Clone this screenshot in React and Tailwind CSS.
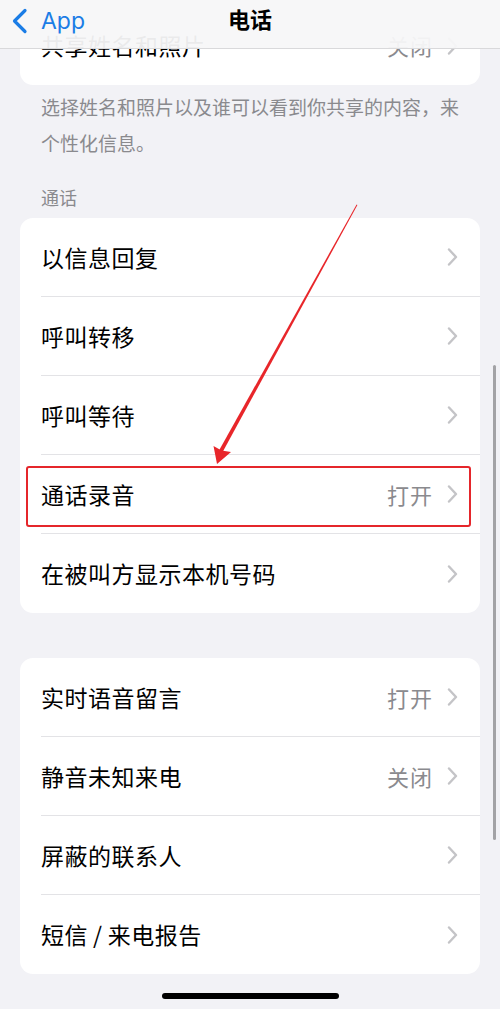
import React from "react";

const font = { fontFamily: '"Noto Sans CJK SC", "Noto Sans", sans-serif' };

function Chevron() {
  return (
    <svg width="11" height="18" viewBox="0 0 11 18" className="shrink-0">
      <path d="M2 1.5 L9 9 L2 16.5" fill="none" stroke="#c4c4c7" strokeWidth="2.4" strokeLinecap="round" strokeLinejoin="round" />
    </svg>
  );
}

function Row({ label, value, last }) {
  return (
    <div className="h-[79px] pl-[21px] flex">
      <div className={`flex-1 flex items-center pr-[22px] ${last ? "" : "border-b border-[#e3e3e6]"}`}>
        <span className="flex-1 text-[23px] text-black tracking-[0.5px]">{label}</span>
        {value && <span className="text-[22px] text-[#8a8a8e] mr-[14px] tracking-[1px]">{value}</span>}
        <Chevron />
      </div>
    </div>
  );
}

export default function App() {
  const group2 = [
    { label: "以信息回复" },
    { label: "呼叫转移" },
    { label: "呼叫等待" },
    { label: "通话录音", value: "打开" },
    { label: "在被叫方显示本机号码" },
  ];
  const group3 = [
    { label: "实时语音留言", value: "打开" },
    { label: "静音未知来电", value: "关闭" },
    { label: "屏蔽的联系人" },
    { label: "短信\u2009/\u2009来电报告" },
  ];
  return (
    <div className="relative w-[500px] h-[1009px] overflow-hidden bg-[#f2f2f6]" style={font}>
      {/* nav bar */}
      <div className="relative z-10 h-[49px] bg-[#f7f7f8]/95 border-b border-[#d9d9db] flex items-center pb-[6px]">
        <div className="flex items-center pl-[11px] text-[#1b7de6]">
          <svg width="18" height="26" viewBox="0 0 18 26">
            <path d="M14 2.5 L3.5 13 L14 23.5" fill="none" stroke="#1b7de6" strokeWidth="3.2" strokeLinecap="round" strokeLinejoin="round" />
          </svg>
          <span className="ml-[12px] text-[23px] leading-none" style={{ fontFamily: '"Inter", "Noto Sans", sans-serif' }}>App</span>
        </div>
        <div className="absolute left-0 right-0 top-0 h-[36px] flex items-center justify-center pointer-events-none">
          <span className="text-[22px] font-semibold text-black">电话</span>
        </div>
      </div>

      <div className="mt-[-43px]">
        {/* card 1 */}
        <div className="mx-[20px] bg-white rounded-[13px] overflow-hidden">
          <Row label="共享姓名和照片" value="关闭" last />
        </div>
        <div className="pl-[41px] pr-[34px] pt-[4px] text-[19px] leading-[36px] text-[#8a8a8e]">
          选择姓名和照片以及谁可以看到你共享的内容，来个性化信息。
        </div>
        <div className="pl-[41px] mt-[18px] text-[18px] leading-[36px] text-[#8a8a8e]">通话</div>
        <div className="mx-[20px] mt-[3px] bg-white rounded-[13px] overflow-hidden">
          {group2.map((r, i) => (
            <Row key={r.label} {...r} last={i === group2.length - 1} />
          ))}
        </div>
        <div className="mx-[20px] mt-[45px] bg-white rounded-[13px] overflow-hidden">
          {group3.map((r, i) => (
            <Row key={r.label} {...r} last={i === group3.length - 1} />
          ))}
        </div>
      </div>

      {/* red highlight box */}
      <div className="absolute left-[26px] top-[466px] w-[445px] h-[61px] border-2 border-[#e5262b] rounded-[3px]" />

      {/* red arrow */}
      <svg className="absolute left-0 top-0" width="500" height="1009" viewBox="0 0 500 1009">
        <polygon points="356.6,204.5 357.4,205 221,455 217.6,453" fill="#e8262a" />
        <polygon points="217,464 213.5,446 221.5,450.5 231,452" fill="#e8262a" />
      </svg>

      {/* scrollbar */}
      <div className="absolute left-[493px] top-[365px] w-[3px] h-[475px] rounded-full bg-[#a3a3a6]" />

      {/* home indicator */}
      <div className="absolute left-[162px] top-[993px] w-[177px] h-[6px] rounded-full bg-black" />
    </div>
  );
}
